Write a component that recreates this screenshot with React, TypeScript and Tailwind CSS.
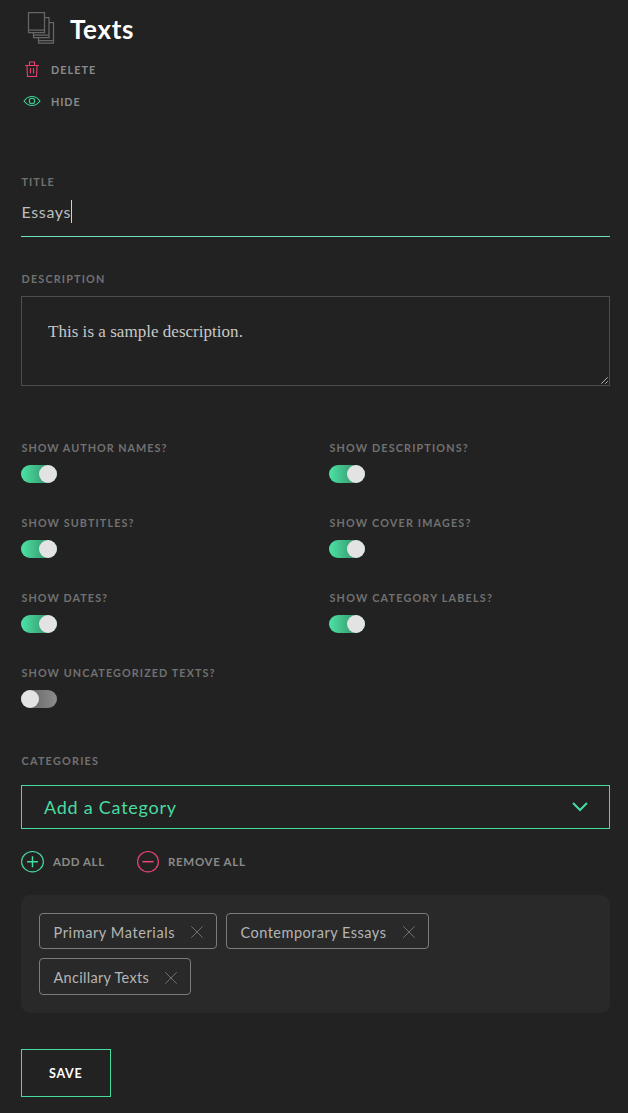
import { useState } from "react";
import type { ReactNode } from "react";

const LABEL = "block pl-[0.5px] h-4 text-[10.8px] leading-4 font-bold text-[#717171] whitespace-nowrap";

function StackIcon() {
  return (
    <svg width="28" height="34" viewBox="0 0 28 34" fill="none" stroke="#666666" strokeWidth="1.25">
      <path d="M1.5 1.5H17.5V21.5H1.5ZM1.5 19H17.5" />
      <path d="M17.5 6.5H22V26.5H6.5V21.5M6.5 24H22" />
      <path d="M22 11.5H26.5V32H11.5V26.5M11.5 29.5H26.5" />
    </svg>
  );
}

function TrashIcon() {
  return (
    <svg className="-mt-[2px]" width="16" height="18" viewBox="0 0 16 18" fill="none" stroke="#ea3f6f" strokeWidth="1.1">
      <path d="M1 5.5H15M5.5 5.5V2H10.5V5.5M3 5.5L3.5 16.5H12.5L13 5.5M6.5 8V13.5M9.5 8V13.5" />
    </svg>
  );
}

function EyeIcon() {
  return (
    <svg className="-mt-[2px]" width="18" height="12" viewBox="0 0 18 12" fill="none" stroke="#3fcf96" strokeWidth="1.1">
      <path d="M1 6C3 3.2 5.7 1.5 9 1.5S15 3.2 17 6C15 8.8 12.3 10.5 9 10.5S3 8.8 1 6Z" />
      <circle cx="9" cy="6" r="2.7" />
    </svg>
  );
}

function CircleIcon({ plus }: { plus?: boolean }) {
  return (
    <svg
      width={plus ? "23" : "22"}
      height="22"
      viewBox={plus ? "0 0 23 22" : "0.5 0 22 22"}
      fill="none"
      stroke={plus ? "#48dba0" : "#ee4473"}
    >
      <ellipse cx="11.5" cy="10.7" rx={plus ? "10.9" : "10.4"} ry="10.2" strokeWidth="1.1" />
      <path d={plus ? "M6 10.7H17M11.5 5.2V16.2" : "M6 10.7H17"} strokeWidth="1.5" />
    </svg>
  );
}

function CloseIcon() {
  return (
    <svg width="12" height="12" viewBox="0 0 12 12" stroke="#707070" strokeWidth="1">
      <path d="M0.3 0.3L11.7 11.7M11.7 0.3L0.3 11.7" />
    </svg>
  );
}

function Toggle({ label, spacing, initial = true }: { label: string; spacing: string; initial?: boolean }) {
  const [on, setOn] = useState(initial);
  return (
    <div className="h-[75px]">
      <span className={`${LABEL} ${spacing}`}>{label}</span>
      <button
        type="button"
        role="switch"
        aria-checked={on}
        aria-label={label}
        onClick={() => setOn(!on)}
        className={`mt-[9px] flex h-[18px] w-9 rounded-full bg-linear-to-r ${
          on ? "justify-end from-[#4be3a5] to-[#2f7e5c]" : "justify-start from-[#5c5c5c] to-[#8d8d8d]"
        }`}
      >
        <span className="size-[18px] rounded-full bg-[#e3e3e3]" />
      </button>
    </div>
  );
}

function Chip({ children, box, spacing }: { children: ReactNode; box: string; spacing: string }) {
  return (
    <div className={`flex items-center justify-between rounded-[4px] border border-[#7c7c7c] pt-[2px] pr-[13px] pl-[13.5px] ${box}`}>
      <span className={`pt-px text-[14.5px] leading-5 whitespace-nowrap text-[#b5b5b5] ${spacing}`}>{children}</span>
      <CloseIcon />
    </div>
  );
}

export default function App() {
  return (
    <main className="h-[1113px] w-[628px] overflow-hidden bg-[#222222] pr-[18px] pl-[21px] font-['Lato',sans-serif]">
      <header className="flex h-[58px] items-start pt-[11px] pl-[6px]">
        <StackIcon />
        <h1 className="ml-[15px] pt-[2px] text-[26px] leading-8 font-bold tracking-[0.65px] text-white">Texts</h1>
      </header>

      <div className="flex h-6 items-center pl-[3px]">
        <TrashIcon />
        <span className="ml-[11px] text-[10.8px] leading-4 font-bold tracking-[1.06px] text-[#8a8a8a]">DELETE</span>
      </div>
      <div className="mt-2 flex h-6 items-center pl-[2px]">
        <EyeIcon />
        <span className="ml-[10px] text-[10.8px] leading-4 font-bold tracking-[0.9px] text-[#8a8a8a]">HIDE</span>
      </div>

      <section className="mt-[60px] h-[63px] border-b border-[#6ce3bd]">
        <span className={`${LABEL} tracking-[1.06px]`}>TITLE</span>
        <div className="mt-[10px] flex h-6 items-start pl-[0.5px]">
          <span className="text-base leading-6 tracking-[0.65px] text-[#bdbdbd]">Essays</span>
          <span className="h-[23px] w-px bg-[#d0d0d0]" />
        </div>
      </section>

      <section className="mt-[34px]">
        <span className={`${LABEL} tracking-[1.18px]`}>DESCRIPTION</span>
        <div className="mt-[9px] flex h-[90px] justify-between border border-[#4d4d4d] pl-[26px]">
          <p className="pt-[23px] font-['Liberation_Serif',serif] text-[17px] leading-6 tracking-[0.03px] text-[#c8c8c8]">
            This is a sample description.
          </p>
          <svg className="mr-px mb-px self-end" width="7" height="7" viewBox="0 0 7 7" stroke="#c4c4c4" strokeWidth="0.9">
            <path d="M0.3 6.7L6.7 0.3M4.3 6.7L6.7 4.3" />
          </svg>
        </div>
      </section>

      <section className="mt-[54px] grid grid-cols-[308px_281px]">
        <Toggle label="SHOW AUTHOR NAMES?" spacing="tracking-[1px]" />
        <Toggle label="SHOW DESCRIPTIONS?" spacing="tracking-[1.15px]" />
        <Toggle label="SHOW SUBTITLES?" spacing="tracking-[1.1px]" />
        <Toggle label="SHOW COVER IMAGES?" spacing="tracking-[1.17px]" />
        <Toggle label="SHOW DATES?" spacing="tracking-[1.06px]" />
        <Toggle label="SHOW CATEGORY LABELS?" spacing="tracking-[1.2px]" />
        <Toggle label="SHOW UNCATEGORIZED TEXTS?" spacing="tracking-[1.1px]" initial={false} />
      </section>

      <section className="mt-[13px]">
        <span className={`${LABEL} tracking-[1.25px]`}>CATEGORIES</span>
        <div className="mt-4 flex h-11 items-center justify-between border border-[#48dba0] pr-[21px] pl-[22px]">
          <span className="text-lg leading-6 tracking-[0.75px] text-[#48dba0]">Add a Category</span>
          <svg width="16" height="10" viewBox="0 0 16 10" fill="none" stroke="#48dba0" strokeWidth="2">
            <path d="M1 1L8 8L15 1" />
          </svg>
        </div>
        <div className="mt-[22px] flex h-[22px] items-center">
          <CircleIcon plus />
          <span className="ml-[9px] w-[84px] text-[11.5px] leading-4 font-bold tracking-[0.55px] text-[#8a8a8a]">ADD ALL</span>
          <CircleIcon />
          <span className="ml-[9px] text-[11.5px] leading-4 font-bold tracking-[0.67px] text-[#8a8a8a]">REMOVE ALL</span>
        </div>
        <div className="mt-[22px] flex h-[118px] flex-wrap content-start gap-[9px] rounded-[9px] bg-[#292929] py-[18px] pr-[60px] pl-[18px]">
          <Chip box="h-9 w-[178px]" spacing="tracking-[0.6px]">Primary Materials</Chip>
          <Chip box="h-9 w-[203px]" spacing="tracking-[0.48px]">Contemporary Essays</Chip>
          <Chip box="h-[37px] w-[152px]" spacing="tracking-[0.3px]">Ancillary Texts</Chip>
        </div>
      </section>

      <button
        type="button"
        className="mt-9 flex h-12 w-[90px] items-center border border-[#48dba0] pt-px pl-[27px] text-[12.5px] leading-5 font-bold tracking-[0.73px] text-white"
      >
        SAVE
      </button>
    </main>
  );
}
